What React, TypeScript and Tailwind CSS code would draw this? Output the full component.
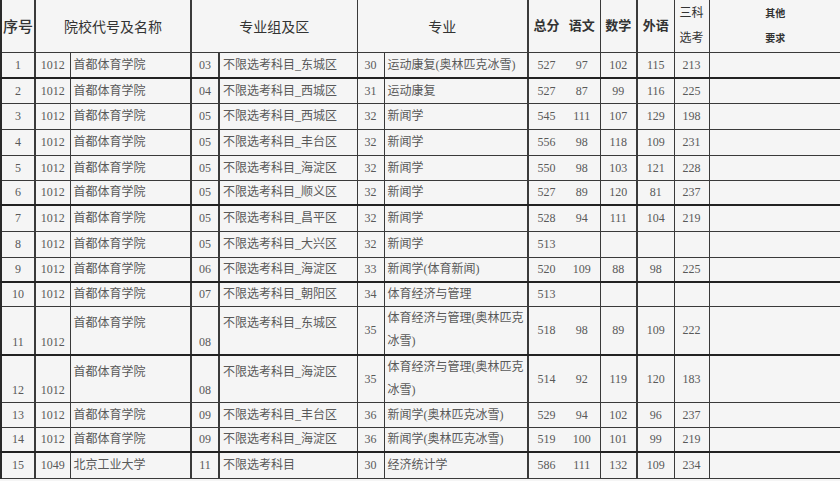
import React from 'react'

type Row = {
  no: string
  code: string
  school: string
  grp: string
  area: string
  mno: string
  major: string[]
  total: string
  yw?: string
  sx?: string
  wy?: string
  sk?: string
  h: string
  tall?: boolean
  thick?: boolean
}

const rows: Row[] = [
  { no: '1', code: '1012', school: '首都体育学院', grp: '03', area: '不限选考科目_东城区', mno: '30', major: ['运动康复(奥林匹克冰雪)'], total: '527', yw: '97', sx: '102', wy: '115', sk: '213', h: 'h-[26px]', thick: true },
  { no: '2', code: '1012', school: '首都体育学院', grp: '04', area: '不限选考科目_西城区', mno: '31', major: ['运动康复'], total: '527', yw: '87', sx: '99', wy: '116', sk: '225', h: 'h-[25px]' },
  { no: '3', code: '1012', school: '首都体育学院', grp: '05', area: '不限选考科目_西城区', mno: '32', major: ['新闻学'], total: '545', yw: '111', sx: '107', wy: '129', sk: '198', h: 'h-[26px]' },
  { no: '4', code: '1012', school: '首都体育学院', grp: '05', area: '不限选考科目_丰台区', mno: '32', major: ['新闻学'], total: '556', yw: '98', sx: '118', wy: '109', sk: '231', h: 'h-[26px]' },
  { no: '5', code: '1012', school: '首都体育学院', grp: '05', area: '不限选考科目_海淀区', mno: '32', major: ['新闻学'], total: '550', yw: '98', sx: '103', wy: '121', sk: '228', h: 'h-[25px]' },
  { no: '6', code: '1012', school: '首都体育学院', grp: '05', area: '不限选考科目_顺义区', mno: '32', major: ['新闻学'], total: '527', yw: '89', sx: '120', wy: '81', sk: '237', h: 'h-[25px]', thick: true },
  { no: '7', code: '1012', school: '首都体育学院', grp: '05', area: '不限选考科目_昌平区', mno: '32', major: ['新闻学'], total: '528', yw: '94', sx: '111', wy: '104', sk: '219', h: 'h-[26px]' },
  { no: '8', code: '1012', school: '首都体育学院', grp: '05', area: '不限选考科目_大兴区', mno: '32', major: ['新闻学'], total: '513', h: 'h-[26px]' },
  { no: '9', code: '1012', school: '首都体育学院', grp: '06', area: '不限选考科目_海淀区', mno: '33', major: ['新闻学(体育新闻)'], total: '520', yw: '109', sx: '88', wy: '98', sk: '225', h: 'h-[25px]', thick: true },
  { no: '10', code: '1012', school: '首都体育学院', grp: '07', area: '不限选考科目_朝阳区', mno: '34', major: ['体育经济与管理'], total: '513', h: 'h-[24px]' },
  { no: '11', code: '1012', school: '首都体育学院', grp: '08', area: '不限选考科目_东城区', mno: '35', major: ['体育经济与管理(奥林匹克', '冰雪)'], total: '518', yw: '98', sx: '89', wy: '109', sk: '222', h: 'h-[49px]', tall: true, thick: true },
  { no: '12', code: '1012', school: '首都体育学院', grp: '08', area: '不限选考科目_海淀区', mno: '35', major: ['体育经济与管理(奥林匹克', '冰雪)'], total: '514', yw: '92', sx: '119', wy: '120', sk: '183', h: 'h-[47px]', tall: true },
  { no: '13', code: '1012', school: '首都体育学院', grp: '09', area: '不限选考科目_丰台区', mno: '36', major: ['新闻学(奥林匹克冰雪)'], total: '529', yw: '94', sx: '102', wy: '96', sk: '237', h: 'h-[25px]' },
  { no: '14', code: '1012', school: '首都体育学院', grp: '09', area: '不限选考科目_海淀区', mno: '36', major: ['新闻学(奥林匹克冰雪)'], total: '519', yw: '100', sx: '101', wy: '99', sk: '219', h: 'h-[24px]', thick: true },
  { no: '15', code: '1049', school: '北京工业大学', grp: '11', area: '不限选考科目', mno: '30', major: ['经济统计学'], total: '586', yw: '111', sx: '132', wy: '109', sk: '234', h: 'h-[27px]' },
]

const cell = 'border border-[#3a3a3a] p-0'

export default function App() {
  return (
    <div className="w-[840px] h-[481px] overflow-hidden bg-[#f5f5f5] font-['Liberation_Serif','Noto_Sans_CJK_SC',serif] text-[12px] leading-[16px] text-[#595959]">
      <table className="w-[840px] table-fixed border-collapse border-l-2 border-l-[#2a2a2a]">
        <colgroup>
          <col className="w-[34px]" />
          <col className="w-[35px]" />
          <col className="w-[121px]" />
          <col className="w-[28px]" />
          <col className="w-[138px]" />
          <col className="w-[27px]" />
          <col className="w-[144px]" />
          <col className="w-[36px]" />
          <col className="w-[36px]" />
          <col className="w-[37px]" />
          <col className="w-[37px]" />
          <col className="w-[35px]" />
          <col className="w-[132px]" />
        </colgroup>
        <thead>
          <tr className="h-[52px] text-[#333]">
            <th className={`${cell} border-t-0 border-r-2 text-[15px] font-medium font-['Noto_Sans_CJK_SC',sans-serif]`}>序号</th>
            <th colSpan={2} className={`${cell} border-t-0 text-[14px] font-normal font-['Noto_Sans_CJK_SC',sans-serif]`}>院校代号及名称</th>
            <th colSpan={2} className={`${cell} border-t-0 border-l-2 text-[14px] font-normal font-['Noto_Sans_CJK_SC',sans-serif]`}>专业组及区</th>
            <th colSpan={2} className={`${cell} border-t-0 text-[14px] font-normal font-['Noto_Sans_CJK_SC',sans-serif]`}>专业</th>
            <th className={`${cell} border-t-0 border-l-2 border-r-0 text-[13px] font-bold`}>总分</th>
            <th className={`${cell} border-t-0 border-l-0 text-[13px] font-bold`}>语文</th>
            <th className={`${cell} border-t-0 text-[13px] font-bold`}>数学</th>
            <th className={`${cell} border-t-0 border-l-2 text-[13px] font-bold`}>外语</th>
            <th className={`${cell} border-t-0 text-[12px] font-normal leading-[25px]`}>
              三科
              <br />
              选考
            </th>
            <th className={`${cell} border-t-0 border-r-0 text-[10px] font-bold leading-[25px]`}>
              其他
              <br />
              要求
            </th>
          </tr>
        </thead>
        <tbody>
          {rows.map((r) => {
            const b = r.thick ? 'border-b-2 border-b-[#222]' : ''
            const numV = r.tall ? 'align-bottom pb-[4px]' : 'align-middle'
            const txtV = r.tall ? 'align-top pt-[8px]' : 'align-middle'
            return (
              <tr key={r.no} className={r.h}>
                <td className={`${cell} ${b} border-r-2 text-center ${numV}`}>{r.no}</td>
                <td className={`${cell} ${b} text-center ${numV}`}>{r.code}</td>
                <td className={`${cell} ${b} pl-[3px] whitespace-nowrap ${txtV}`}>{r.school}</td>
                <td className={`${cell} ${b} border-l-2 text-center ${numV}`}>{r.grp}</td>
                <td className={`${cell} ${b} border-l-2 pl-[3px] whitespace-nowrap ${txtV}`}>{r.area}</td>
                <td className={`${cell} ${b} text-center align-middle`}>{r.mno}</td>
                <td className={`${cell} ${b} pl-[3px] align-middle whitespace-nowrap ${r.tall ? 'leading-[23px]' : ''}`}>
                  {r.major.map((m, i) => (
                    <div key={i}>{m}</div>
                  ))}
                </td>
                <td className={`${cell} ${b} border-l-2 border-r-0 text-center align-middle`}>{r.total}</td>
                <td className={`${cell} ${b} border-l-0 text-center align-middle`}>{r.yw ?? ''}</td>
                <td className={`${cell} ${b} text-center align-middle`}>{r.sx ?? ''}</td>
                <td className={`${cell} ${b} border-l-2 text-center align-middle`}>{r.wy ?? ''}</td>
                <td className={`${cell} ${b} text-center align-middle`}>{r.sk ?? ''}</td>
                <td className={`${cell} ${b} border-r-0`}></td>
              </tr>
            )
          })}
        </tbody>
      </table>
    </div>
  )
}
